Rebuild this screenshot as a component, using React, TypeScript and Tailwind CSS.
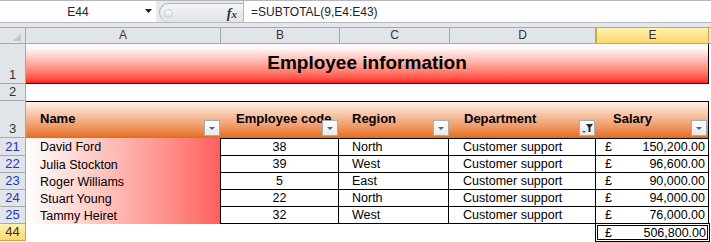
import type { ReactNode } from "react";

type Row = {
  num: number;
  name: string;
  code: number;
  region: string;
  dept: string;
  salary: string;
};

const rows: Row[] = [
  { num: 21, name: "David Ford", code: 38, region: "North", dept: "Customer support", salary: "150,200.00" },
  { num: 22, name: "Julia Stockton", code: 39, region: "West", dept: "Customer support", salary: "96,600.00" },
  { num: 23, name: "Roger Williams", code: 5, region: "East", dept: "Customer support", salary: "90,000.00" },
  { num: 24, name: "Stuart Young", code: 22, region: "North", dept: "Customer support", salary: "94,000.00" },
  { num: 25, name: "Tammy Heiret", code: 32, region: "West", dept: "Customer support", salary: "76,000.00" },
];

function RowHead({ children, h, active, blue }: { children: ReactNode; h: string; active?: boolean; blue?: boolean }) {
  return (
    <div
      className={`flex w-[26px] shrink-0 items-end justify-center border-r border-b pb-[1px] text-[13px] leading-[14px] ${h} ${
        active
          ? "border-[#c9a24a] bg-linear-to-b from-[#fff1b0] to-[#fcd86c] text-[#333]"
          : "border-[#a4a9b0] bg-[#e1e5ea]"
      } ${blue ? "text-[#2037c4]" : active ? "" : "text-[#333]"}`}
    >
      {children}
    </div>
  );
}

function FilterButton({ filtered }: { filtered?: boolean }) {
  return (
    <div className="absolute right-[1px] bottom-[2px] flex h-[16px] w-[16px] items-center justify-center border border-[#a8acb2] bg-linear-to-b from-white to-[#e6e9ed]">
      {filtered ? (
        <svg width="14" height="14" viewBox="0 0 14 14">
          <polygon points="2,10 6,10 4,12" fill="#5a5a5a" />
          <polygon points="6,3 13,3 10.5,6.5 10.5,11 8.5,11 8.5,6.5" fill="#2b2b2b" />
        </svg>
      ) : (
        <svg width="14" height="14" viewBox="0 0 14 14">
          <polygon points="4,6 10,6 7,9" fill="#606468" />
        </svg>
      )}
    </div>
  );
}

function HeadCell({ w, label, pl, filtered }: { w: string; label: string; pl: string; filtered?: boolean }) {
  return (
    <div className={`relative flex h-full shrink-0 items-center whitespace-nowrap pb-[2px] text-[13px] font-bold text-black ${w} ${pl}`}>
      {label}
      <FilterButton filtered={filtered} />
    </div>
  );
}

export default function App() {
  return (
    <div className="h-[242px] w-[711px] overflow-hidden bg-white font-['Liberation_Sans',Arial,sans-serif] text-black">
      {/* formula bar */}
      <div className="flex h-[23px] border-y border-[#b4b8be] bg-[#e6e9ed]">
        <div className="relative flex w-[156px] shrink-0 items-center justify-center bg-white text-[12px] text-[#222]">
          E44
          <svg className="absolute right-[4px] top-[8px]" width="7" height="5" viewBox="0 0 7 5">
            <polygon points="0,0 7,0 3.5,4" fill="#222" />
          </svg>
        </div>
        <div className="flex w-[87px] shrink-0 items-end pl-[3px]">
          <div className="flex h-[19px] flex-1 items-center rounded-l-[10px] border-t border-l border-[#b0b5bb] bg-linear-to-b from-[#f3f5f7] to-[#e1e4e8] pl-[4px] pr-[6px]">
            <div className="h-[9px] w-[9px] rounded-full border border-[#c8ccd1] bg-linear-to-b from-white to-[#d9dde2]" />
            <span className="ml-auto font-['Liberation_Serif',serif] text-[14px] font-bold italic text-[#333]">
              f<span className="text-[11px]">x</span>
            </span>
          </div>
        </div>
        <div className="flex flex-1 items-center border-l border-[#b4b8be] bg-white pl-[7px] text-[12px] text-[#222]">
          =SUBTOTAL(9,E4:E43)
        </div>
      </div>
      <div className="h-[4px] bg-[#e4e7eb]" />

      {/* column headers */}
      <div className="flex h-[17px] border-y border-[#a4a9b0] bg-[#e1e5ea] text-[12px] leading-[15px] text-[#333]">
        <div className="flex w-[26px] shrink-0 items-end justify-end border-r border-[#a4a9b0] pb-[2px] pr-[4px]">
          <svg width="8" height="8" viewBox="0 0 8 8">
            <polygon points="8,0 8,8 0,8" fill="#c3c7cc" />
          </svg>
        </div>
        <div className="w-[195px] shrink-0 border-r border-[#a4a9b0] text-center">A</div>
        <div className="w-[119px] shrink-0 border-r border-[#a4a9b0] text-center">B</div>
        <div className="w-[110px] shrink-0 border-r border-[#a4a9b0] text-center">C</div>
        <div className="w-[146px] shrink-0 border-r border-[#a4a9b0] text-center">D</div>
        <div className="w-[113px] shrink-0 border-x border-[#c9a24a] bg-linear-to-b from-[#fff1b0] to-[#fcd86c] text-center">
          E
        </div>
      </div>

      {/* row 1: title */}
      <div className="flex">
        <RowHead h="h-[40px]">1</RowHead>
        <div className="flex h-[40px] w-[683px] items-center justify-center border-r border-b border-black bg-linear-to-b from-[#fffafa] from-10% to-[#ff1e1e] text-[19px] font-bold">
          Employee information
        </div>
      </div>

      {/* row 2 */}
      <div className="flex">
        <RowHead h="h-[17px]">2</RowHead>
        <div className="h-[17px] w-[683px]" />
      </div>

      {/* row 3: table headers */}
      <div className="flex">
        <RowHead h="h-[37px]">3</RowHead>
        <div className="flex h-[37px] w-[683px] border-t border-r border-black bg-linear-to-b from-[#fdf1e8] to-[#e46c0c]">
          <HeadCell w="w-[195px]" label="Name" pl="pl-[14px]" />
          <HeadCell w="w-[118px]" label="Employee code" pl="pl-[15px]" />
          <HeadCell w="w-[111px]" label="Region" pl="pl-[13px]" />
          <HeadCell w="w-[146px]" label="Department" pl="pl-[14px]" filtered />
          <HeadCell w="w-[112px]" label="Salary" pl="pl-[17px]" />
        </div>
      </div>

      {/* data rows */}
      {rows.map((r, i) => {
        const h = i === 0 ? "h-[18px]" : "h-[17px]";
        const top = i === 0 ? "border-t" : "";
        return (
          <div key={r.num} className="flex text-[12.5px] leading-[16px]">
            <RowHead h={h} blue>
              {r.num}
            </RowHead>
            <div className={`flex w-[194px] shrink-0 items-center bg-linear-to-r from-white to-[#ff5e5e] pl-[14px] ${h}`}>
              {r.name}
            </div>
            <div className={`flex w-[119px] shrink-0 items-center justify-center border-x border-b border-black ${top} ${h}`}>
              {r.code}
            </div>
            <div className={`flex w-[110px] shrink-0 items-center border-r border-b border-black pl-[13px] ${top} ${h}`}>
              {r.region}
            </div>
            <div className={`flex w-[147px] shrink-0 items-center border-r border-b border-black pl-[14px] ${top} ${h}`}>
              {r.dept}
            </div>
            <div className={`flex w-[113px] shrink-0 items-center border-r border-b border-black pl-[9px] pr-[3px] ${top} ${h}`}>
              <span>£</span>
              <span className="ml-auto">{r.salary}</span>
            </div>
          </div>
        );
      })}

      {/* row 44: total */}
      <div className="flex text-[12.5px] leading-[14px]">
        <RowHead h="h-[17px]" active>
          44
        </RowHead>
        <div className="h-[17px] w-[570px] shrink-0" />
        <div className="-mt-[1px] -ml-[1px] flex h-[19px] w-[115px] shrink-0 items-center border-[3px] border-double border-black pl-[7px] pr-[1px]">
          <span>£</span>
          <span className="ml-auto">506,800.00</span>
        </div>
      </div>
    </div>
  );
}
